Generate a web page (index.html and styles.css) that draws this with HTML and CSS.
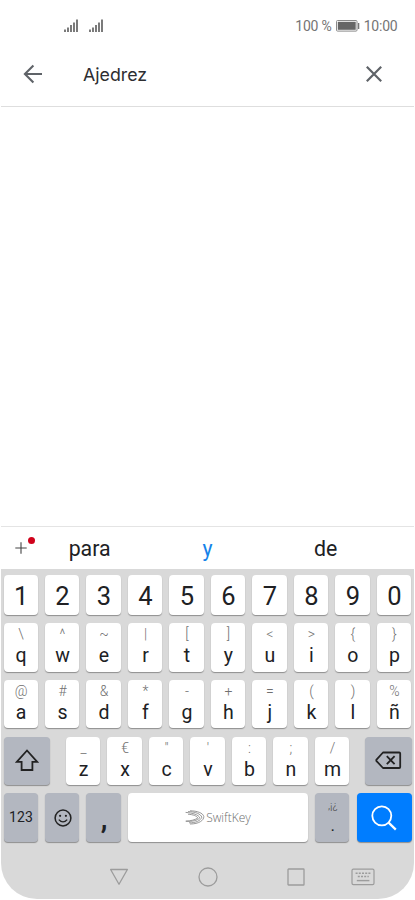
FILE: index.html
```html
<!DOCTYPE html>
<html lang="es">
<head>
    <meta charset="UTF-8">
    <meta name="viewport" content="width=device-width, initial-scale=1.0">
    <title>Ajedrez</title>
    <link rel="stylesheet" href="styles.css">
</head>
<body>
    <div class="phone">
        <div class="status-bar">
            <div class="signals">
                <svg width="14" height="13" viewBox="0 0 14 13"><path d="M1 10.5V13M4 8.5V13M7 6V13M10 3.5V13M13 .5V13" stroke="#757575" stroke-width="1.9"/></svg>
                <svg width="14" height="13" viewBox="0 0 14 13"><path d="M1 10.5V13M4 8.5V13M7 6V13M10 3.5V13M13 .5V13" stroke="#757575" stroke-width="1.9"/></svg>
            </div>
            <span class="percent">100 %</span>
            <svg class="battery" width="24" height="12" viewBox="0 0 24 12">
                <rect x=".5" y=".5" width="20.5" height="10.6" rx="1" fill="#fff" stroke="#8a8a8a"/>
                <rect x="1.8" y="1.8" width="17.9" height="8" fill="#666"/>
                <path d="M22.6 3v6" stroke="#777" stroke-width="1.4"/>
            </svg>
            <span class="clock">10:00</span>
        </div>

        <div class="search-bar">
            <svg class="back" width="20" height="20" viewBox="0 0 20 20"><path d="M19 10H2M10.4 1.5L1.9 10l8.5 8.5" fill="none" stroke="#5f6368" stroke-width="2.1"/></svg>
            <span class="search-text">Ajedrez</span>
            <svg class="clear" width="16" height="16" viewBox="0 0 16 16"><path d="M.8.8l14.4 14.4M15.2.8L.8 15.2" stroke="#5f6368" stroke-width="2.2"/></svg>
        </div>

        <div class="content"></div>

        <div class="suggestions">
            <div class="plus">
                <svg width="12" height="12" viewBox="0 0 12 12"><path d="M6 .3v11.4M.3 6h11.4" stroke="#444" stroke-width="1.1"/></svg>
                <span class="dot"></span>
            </div>
            <span class="word">para</span>
            <span class="word active">y</span>
            <span class="word">de</span>
        </div>

        <div class="keyboard">
            <div class="row numbers">
                <div class="key">1</div>
                <div class="key">2</div>
                <div class="key">3</div>
                <div class="key">4</div>
                <div class="key">5</div>
                <div class="key">6</div>
                <div class="key">7</div>
                <div class="key">8</div>
                <div class="key">9</div>
                <div class="key">0</div>
            </div>
            <div class="row">
                <div class="key"><small>\</small>q</div>
                <div class="key"><small>^</small>w</div>
                <div class="key"><small>~</small>e</div>
                <div class="key"><small>|</small>r</div>
                <div class="key"><small>[</small>t</div>
                <div class="key"><small>]</small>y</div>
                <div class="key"><small>&lt;</small>u</div>
                <div class="key"><small>&gt;</small>i</div>
                <div class="key"><small>{</small>o</div>
                <div class="key"><small>}</small>p</div>
            </div>
            <div class="row">
                <div class="key"><small>@</small>a</div>
                <div class="key"><small>#</small>s</div>
                <div class="key"><small>&amp;</small>d</div>
                <div class="key"><small>*</small>f</div>
                <div class="key"><small>-</small>g</div>
                <div class="key"><small>+</small>h</div>
                <div class="key"><small>=</small>j</div>
                <div class="key"><small>(</small>k</div>
                <div class="key"><small>)</small>l</div>
                <div class="key"><small>%</small>ñ</div>
            </div>
            <div class="row spread">
                <div class="key dark wide">
                    <svg width="24" height="23" viewBox="0 0 24 23"><path d="M12 1.5L1.8 12.8H6.6V21H17.4V12.8H22.2Z" fill="none" stroke="#222" stroke-width="1.8"/></svg>
                </div>
                <div class="letters">
                    <div class="key"><small>_</small>z</div>
                    <div class="key"><small>€</small>x</div>
                    <div class="key"><small>"</small>c</div>
                    <div class="key"><small>'</small>v</div>
                    <div class="key"><small>:</small>b</div>
                    <div class="key"><small>;</small>n</div>
                    <div class="key"><small>/</small>m</div>
                </div>
                <div class="key dark wide">
                    <svg width="27" height="19" viewBox="0 0 27 19">
                        <path d="M8 1.5H24.2a1 1 0 0 1 1 1V16a1 1 0 0 1-1 1H8L1.3 9.8V8.8Z" fill="none" stroke="#222" stroke-width="1.8" stroke-linejoin="round"/>
                        <path d="M11.8 5.2l7.8 8M19.6 5.2l-7.8 8" stroke="#222" stroke-width="1.8"/>
                    </svg>
                </div>
            </div>
            <div class="row">
                <div class="key dark num">123</div>
                <div class="key dark">
                    <svg width="18" height="18" viewBox="0 0 18 18">
                        <circle cx="9" cy="9" r="7.9" fill="none" stroke="#222" stroke-width="1.5"/>
                        <circle cx="6.1" cy="6.8" r="1.1" fill="#222"/>
                        <circle cx="11.9" cy="6.8" r="1.1" fill="#222"/>
                        <path d="M4.8 10.6q4.2 4.6 8.4 0" fill="none" stroke="#222" stroke-width="1.4"/>
                    </svg>
                </div>
                <div class="key dark comma">,</div>
                <div class="key space">
                    <svg width="20" height="15" viewBox="0 0 20 15" fill="none" stroke="#8c8c8c" stroke-width=".9">
                        <path d="M5 .8C12 .8 18 3 18.8 6.4C19 10.4 14 14 5 14"/>
                        <path d="M3 1.6C10 1.6 16 4 16.8 7.2C15.6 10.6 11 13 4 12.8"/>
                        <path d="M.6 2.4C8 3 13.6 4.8 14.8 7.8C12.4 10.6 7 11.8 .8 11.2"/>
                        <path d="M3 4.2C8.4 4.6 11.8 6 12.8 8C10 9.8 6.4 10.8 .8 11.2"/>
                    </svg>
                    <span>SwiftKey</span>
                </div>
                <div class="key dark period"><small>,¡¿</small>.</div>
                <div class="key search">
                    <svg width="26" height="26" viewBox="0 0 26 26"><circle cx="10.8" cy="10.8" r="9.5" fill="none" stroke="#fff" stroke-width="1.8"/><path d="M17.6 17.6l7.2 7" stroke="#fff" stroke-width="2.2"/></svg>
                </div>
            </div>

            <div class="nav">
                <svg width="20" height="18" viewBox="0 0 20 18"><path d="M1.6 1.5H18.4L10 16.2Z" fill="none" stroke="#9c9c9c" stroke-width="1.3" stroke-linejoin="round"/></svg>
                <svg width="20" height="20" viewBox="0 0 20 20"><circle cx="10" cy="10" r="9" fill="none" stroke="#9c9c9c" stroke-width="1.3"/></svg>
                <svg width="18" height="18" viewBox="0 0 18 18"><rect x="1" y="1" width="16" height="16" rx=".6" fill="none" stroke="#9c9c9c" stroke-width="1.3"/></svg>
                <svg width="24" height="18" viewBox="0 0 24 18">
                    <rect x="1" y="1.2" width="22" height="15.4" rx="1.4" fill="none" stroke="#9c9c9c" stroke-width="1.2"/>
                    <path d="M4.6 5.2h15M6.8 8.6h11" stroke="#9c9c9c" stroke-width="1.5" stroke-dasharray="2 1.2"/>
                    <path d="M5.8 12.6h12.6" stroke="#9c9c9c" stroke-width="1.4"/>
                </svg>
            </div>
        </div>
    </div>
</body>
</html>
```
FILE: styles.css
```css
* {
    box-sizing: border-box;
}

body {
    margin: 0;
    background-color: #fff;
    font-family: Roboto, "Liberation Sans", sans-serif;
    color: #202124;
}

svg {
    display: block;
    flex: none;
}

.phone {
    width: 413px;
    height: 900px;
    margin-left: 1px;
    display: flex;
    flex-direction: column;
}

.status-bar {
    height: 42px;
    padding: 10px 16.5px 0 63px;
    display: flex;
    align-items: center;
    font-size: 14px;
    color: #757575;
}
.signals {
    display: flex;
    gap: 11px;
    margin-right: auto;
    padding-bottom: 2px;
}
.percent {
    letter-spacing: -0.2px;
}
.battery {
    margin: 0 4px 1px;
}
.clock {
    letter-spacing: -0.2px;
}

.search-bar {
    height: 65px;
    padding: 0 32.5px 0 21.5px;
    display: flex;
    align-items: center;
    border-bottom: 1.5px solid #dedede;
}
.search-text {
    margin-left: 40.5px;
    font-family: Inter, Roboto, sans-serif;
    font-size: 17.8px;
    color: #2d2e31;
}
.clear {
    margin-left: auto;
}

.content {
    flex: 1;
}

.suggestions {
    height: 43px;
    padding-left: 0.6px;
    display: flex;
    align-items: center;
    border-top: 1.5px solid #e4e4e4;
}
.plus {
    position: relative;
    width: 29px;
    padding-left: 13px;
}
.dot {
    position: absolute;
    top: -5px;
    left: 26px;
    width: 7px;
    height: 7px;
    border-radius: 50%;
    background-color: #d0021b;
}
.word {
    width: 118px;
    text-align: center;
    font-size: 21.3px;
}
.word.active {
    color: #1583e9;
}

.keyboard {
    height: 330px;
    padding: 5.5px 2.3px 0 2.5px;
    background-color: #d9d9d9;
    border-radius: 0 0 36px 36px;
    margin-bottom: 1px;
}
.row,
.letters {
    display: flex;
    gap: 7.2px;
}
.row {
    margin-bottom: 8.2px;
}
.spread {
    justify-content: space-between;
    gap: 0;
}
.key {
    width: 34.3px;
    height: 48.6px;
    flex: none;
    display: flex;
    flex-direction: column;
    align-items: center;
    padding-left: 0.8px;
    background-color: #fff;
    border-radius: 4px;
    box-shadow: 0 1px 1px #8e8e8e;
    font-size: 19.5px;
    line-height: 25px;
}
.key small {
    height: 20px;
    font-size: 14px;
    font-weight: 300;
    line-height: 22px;
    color: #707070;
}
.numbers .key {
    height: 40.4px;
    font-size: 25.5px;
    line-height: 43px;
}
.key.dark {
    background-color: #b3b7c0;
    justify-content: center;
}
.key.wide {
    width: 46.7px;
}
.key.num {
    font-size: 14px;
    letter-spacing: 0.1px;
}
.key.comma {
    padding-top: 4px;
    font-size: 27px;
    font-weight: bold;
}
.key.space {
    width: 180px;
    padding: 0;
    flex-direction: row;
    justify-content: center;
    gap: 1px;
    font-family: "Open Sans", sans-serif;
    font-size: 12px;
    font-weight: 300;
    color: #6c6c6c;
}
.key.period {
    font-size: 17px;
    justify-content: flex-start;
}
.period small {
    font-size: 11px;
    color: #444;
    line-height: 26px;
}
.key.search {
    width: 55.3px;
    padding: 0;
    justify-content: center;
    background-color: #007dff;
}

.nav {
    display: flex;
    align-items: center;
    padding: 17px 37px 0 105.5px;
}
.nav svg:nth-child(2) {
    margin-left: 69px;
}
.nav svg:nth-child(3) {
    margin-left: 69px;
}
.nav svg:nth-child(4) {
    margin-left: auto;
}
```
